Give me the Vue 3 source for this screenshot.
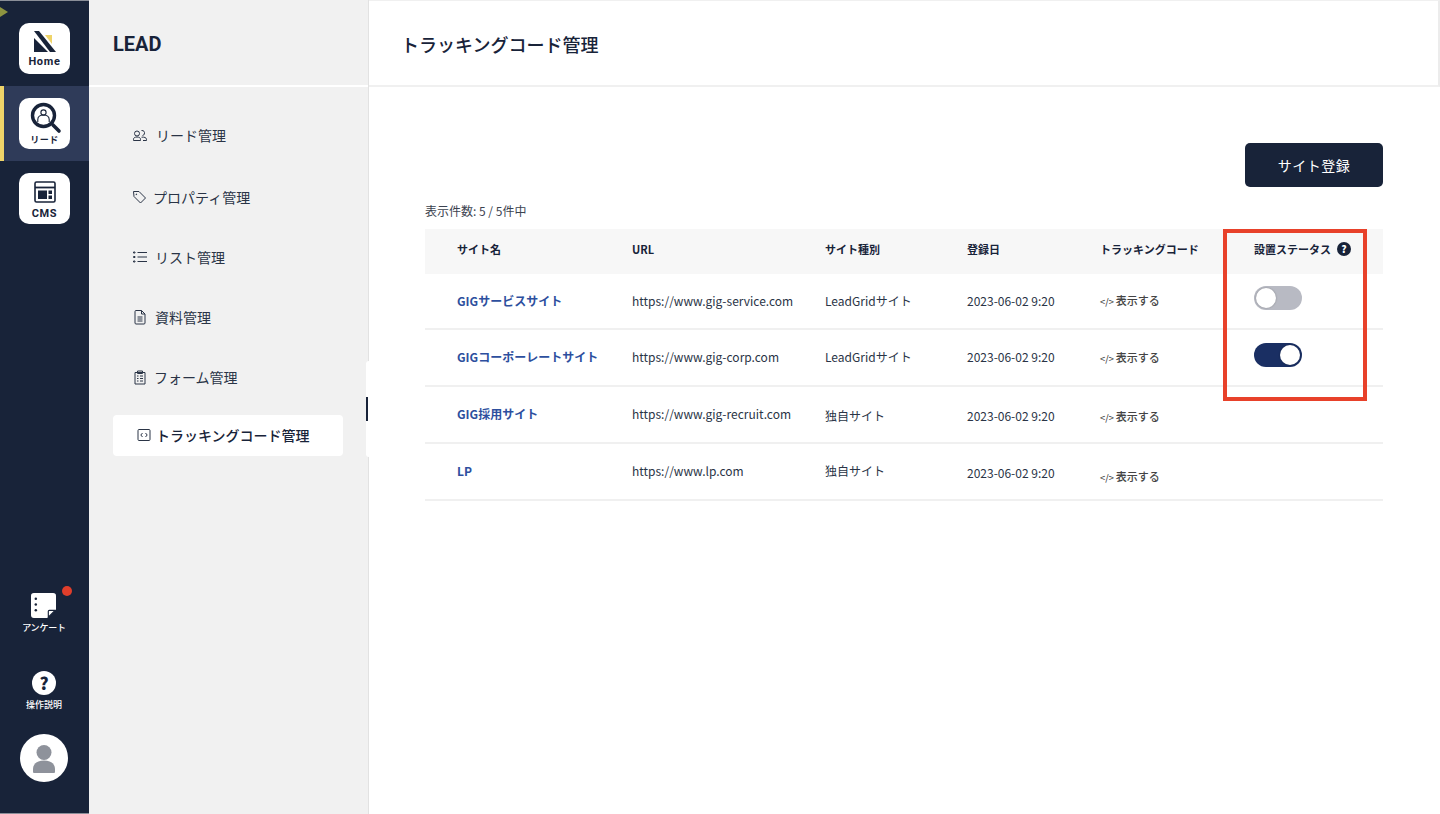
<template>
  <div class="app">
    <aside class="rail">
      <span class="corner"></span>
      <div class="rail-top">
        <div class="rail-slot">
          <a class="tile">
            <svg class="tile-icon" viewBox="0 0 22 22" width="22" height="22">
              <path d="M0 0h5l17 21h-6z" fill="#182339" />
              <path d="M0 7l14 14H0z" fill="#182339" />
              <path d="M11 4h7v9z" fill="#efd469" />
            </svg>
            <span class="tile-label en home">Home</span>
          </a>
        </div>
        <div class="rail-slot active">
          <a class="tile">
            <svg class="tile-icon search" viewBox="0 0 32 32" width="32" height="32">
              <circle cx="13.5" cy="13.5" r="11" fill="none" stroke="#182339" stroke-width="3.4" />
              <circle cx="13.5" cy="10.5" r="2.6" fill="none" stroke="#182339" stroke-width="1.1" />
              <path d="M7.8 20v-2.600c0-2.600 2.400-4.400 5.700-4.400s5.700 1.800 5.700 4.400V20" fill="none" stroke="#182339" stroke-width="1.1" />
              <path d="M23 23l6 6" stroke="#182339" stroke-width="3.6" stroke-linecap="round" />
            </svg>
            <span class="tile-label ja">リード</span>
          </a>
        </div>
        <div class="rail-slot">
          <a class="tile">
            <svg class="tile-icon" viewBox="0 0 22 22" width="22" height="22">
              <rect x="1" y="1" width="20" height="20" rx="1.500" fill="none" stroke="#182339" stroke-width="1.600" />
              <path d="M1 6.500h20" stroke="#182339" stroke-width="1.800" />
              <path d="M4 9.500h9v8.500H4zM14.500 9.500H18V13h-3.500zM14.500 14.500H18V18h-3.500z" fill="#182339" />
            </svg>
            <span class="tile-label en cms">CMS</span>
          </a>
        </div>
      </div>

      <div class="rail-bottom">
        <a class="rail-link survey">
          <i class="red-dot"></i>
          <svg viewBox="0 0 26 26" width="25" height="25">
            <path d="M3 0h20a3 3 0 0 1 3 3v14l-9 9H3a3 3 0 0 1-3-3V3a3 3 0 0 1 3-3z" fill="#fff" />
            <path d="M18 25v-6a1 1 0 0 1 1-1h6z" fill="#fff" stroke="#182339" stroke-width="1.200" />
            <circle cx="5" cy="6" r="1.300" fill="#182339" />
            <circle cx="5" cy="12" r="1.300" fill="#182339" />
            <circle cx="5" cy="18" r="1.300" fill="#182339" />
          </svg>
          <span>アンケート</span>
        </a>
        <a class="rail-link help">
          <span class="help-circle">?</span>
          <span>操作説明</span>
        </a>
        <div class="avatar">
          <svg viewBox="0 0 48 48" width="48" height="48">
            <circle cx="24" cy="18.500" r="7.500" fill="#8e929b" />
            <path d="M13 38v-3c0-5 4-8.500 11-8.500s11 3.500 11 8.500v3a1 1 0 0 1-1 1H14a1 1 0 0 1-1-1z" fill="#8e929b" />
          </svg>
        </div>
      </div>
    </aside>

    <nav class="side">
      <div class="side-head">LEAD</div>
      <ul class="side-list">
        <li v-for="item in menu" :key="item.label" :class="['side-item', item.cls, { current: item.current }]">
          <svg viewBox="0 0 16 16" width="16" height="16" fill="none" stroke="#2a3446" stroke-width="1">
            <path v-for="d in item.icon" :key="d" :d="d" />
          </svg>
          <span>{{ item.label }}</span>
        </li>
      </ul>
      <div class="notch"><i></i></div>
    </nav>

    <main class="main">
      <header class="main-head">
        <h1>トラッキングコード管理</h1>
      </header>
      <section class="content">
        <div class="actions">
          <button class="primary">サイト登録</button>
        </div>
        <p class="count">表示件数: 5 / 5件中</p>
        <div class="table-wrap">
          <table>
            <thead>
              <tr>
                <th class="c-name">サイト名</th>
                <th class="c-url">URL</th>
                <th class="c-type">サイト種別</th>
                <th class="c-date">登録日</th>
                <th class="c-code">トラッキングコード</th>
                <th>
                  <span class="status-head">設置ステータス<i class="q">?</i></span>
                </th>
              </tr>
            </thead>
            <tbody>
              <tr v-for="site in sites" :key="site.name" :style="{ height: site.h + 'px' }">
                <td class="name">{{ site.name }}</td>
                <td>{{ site.url }}</td>
                <td :style="{ paddingTop: site.typeDrop + 'px' }">{{ site.type }}</td>
                <td :style="{ paddingTop: site.dateDrop + 'px' }">{{ site.date }}</td>
                <td class="show" :style="{ paddingTop: site.showDrop + 'px' }">
                  <span class="code">&lt;/&gt;</span>表示する
                </td>
                <td>
                  <span v-if="site.on !== null" :class="['toggle', { on: site.on }]"><i></i></span>
                </td>
              </tr>
            </tbody>
          </table>
          <div class="highlight"></div>
        </div>
      </section>
    </main>
  </div>
</template>

<script setup>
const menu = [
  {
    label: 'リード管理',
    cls: 'leads',
    icon: [
      'M1.500 13.500v-1.200c0-1.500 1.300-2.300 3.500-2.300s3.500.8 3.500 2.300v1.200z',
      'M9.500 10.200c2.800-.4 5 .5 5 2.100v1.200h-3.500',
      'M5 4a2.500 2.500 0 1 0 0 5 2.500 2.500 0 0 0 0-5z',
      'M9.500 3.500a2.500 2.500 0 1 1 1 5',
    ],
  },
  {
    label: 'プロパティ管理',
    cls: 'props',
    icon: ['M1.500 2.500h5.500l6.500 6.500-5 5-6.500-6.500z', 'M4 5h.6v.6H4z'],
  },
  {
    label: 'リスト管理',
    cls: 'lists',
    icon: ['M5.500 3.500H15', 'M5.500 8H15', 'M5.500 12.500H15', 'M1.500 3h1.500v1H1.500z', 'M1.500 7.500h1.500v1H1.500z', 'M1.500 12h1.500v1H1.500z'],
  },
  {
    label: '資料管理',
    cls: 'docs',
    icon: ['M3 2.500a1 1 0 0 1 1-1h5.500L13 5v9a1 1 0 0 1-1 1H4a1 1 0 0 1-1-1z', 'M9.500 1.500V5H13', 'M5.500 8h5', 'M5.500 10h5', 'M5.500 12h5'],
  },
  {
    label: 'フォーム管理',
    cls: 'forms',
    icon: ['M3 3.500h10V15H3z', 'M5.500 2h5v2.500h-5z', 'M5 7h1.500', 'M8 7h3', 'M5 9.500h1.500', 'M8 9.500h3', 'M5 12h1.500', 'M8 12h3'],
  },
  {
    label: 'トラッキングコード管理',
    cls: 'codes',
    current: true,
    icon: ['M3 2.500h10a1 1 0 0 1 1 1v9a1 1 0 0 1-1 1H3a1 1 0 0 1-1-1v-9a1 1 0 0 1 1-1z', 'M6.500 6L4.800 8l1.700 2', 'M9.500 6l1.700 2-1.700 2'],
  },
]

const sites = [
  { name: 'GIGサービスサイト', url: 'https://www.gig-service.com', type: 'LeadGridサイト', date: '2023-06-02 9:20', on: false, h: 55, typeDrop: 0, dateDrop: 0, showDrop: 0 },
  { name: 'GIGコーポーレートサイト', url: 'https://www.gig-corp.com', type: 'LeadGridサイト', date: '2023-06-02 9:20', on: true, h: 57, typeDrop: 0, dateDrop: 0, showDrop: 0 },
  { name: 'GIG採用サイト', url: 'https://www.gig-recruit.com', type: '独自サイト', date: '2023-06-02 9:20', on: null, h: 57, typeDrop: 4, dateDrop: 4, showDrop: 4 },
  { name: 'LP', url: 'https://www.lp.com', type: '独自サイト', date: '2023-06-02 9:20', on: null, h: 57, typeDrop: 0, dateDrop: 4, showDrop: 10 },
]
</script>

<style>
html,
body {
  margin: 0;
  background: #fff;
}
</style>

<style scoped>
.app {
  display: flex;
  width: 1440px;
  height: 814px;
  overflow: hidden;
  font-family: "Noto Sans CJK JP", "Noto Sans", sans-serif;
  color: #182339;
}

.rail {
  position: relative;
  flex: 0 0 89px;
  box-sizing: border-box;
  display: flex;
  flex-direction: column;
  justify-content: space-between;
  background: #182339;
  border-top: 1px solid #8a8e98;
  border-bottom: 1px solid #8a8e98;
}

.corner {
  position: absolute;
  left: 0;
  top: 6px;
  border-left: 8px solid #8e9440;
  border-top: 5px solid transparent;
  border-bottom: 5px solid transparent;
}

.rail-top {
  padding-top: 10px;
  display: flex;
  flex-direction: column;
}

.rail-slot {
  height: 75px;
  display: flex;
  align-items: center;
  justify-content: center;
}

.rail-slot.active {
  background: #2f3b59;
  box-shadow: inset 4px 0 0 #efd469;
}

.tile {
  width: 51px;
  height: 51px;
  background: #fff;
  border-radius: 10px;
  display: flex;
  flex-direction: column;
  align-items: center;
}

.tile-icon {
  display: block;
  margin-top: 8px;
  flex: none;
}

.tile-icon.search {
  margin-top: 4px;
  margin-left: 2px;
}

.tile-label {
  font-weight: 700;
  line-height: 12px;
  color: #182339;
}

.tile-label.en {
  font-family: Roboto, "Noto Sans", sans-serif;
  font-size: 11px;
  letter-spacing: 0.7px;
}

.tile-label.home {
  margin-top: 3px;
}

.tile-label.cms {
  margin-top: 5px;
}

.tile-label.ja {
  font-size: 9px;
  letter-spacing: 0.5px;
}

.rail-bottom {
  display: flex;
  flex-direction: column;
  align-items: center;
  padding: 0 1px 31px 0;
}

.rail-link {
  position: relative;
  display: flex;
  flex-direction: column;
  align-items: center;
  color: #fff;
  font-size: 9px;
  font-weight: 500;
  line-height: 13px;
}

.survey {
  gap: 3px;
  letter-spacing: -0.2px;
}

.red-dot {
  position: absolute;
  left: 40px;
  top: -7px;
  width: 10px;
  height: 10px;
  border-radius: 50%;
  background: #e03e2b;
}

.help {
  margin-top: 37px;
  gap: 3px;
}

.help-circle {
  width: 24px;
  height: 24px;
  border-radius: 50%;
  background: #fff;
  color: #182339;
  font-size: 17px;
  font-weight: 900;
  line-height: 24px;
  text-align: center;
}

.avatar {
  margin-top: 23px;
  width: 48px;
  height: 48px;
  border-radius: 50%;
  background: #fff;
}

.avatar svg {
  display: block;
}

.side {
  position: relative;
  flex: 0 0 280px;
  background: #f1f1f1;
  border-right: 1px solid #e2e2e2;
  box-sizing: border-box;
}

.side-head {
  height: 87px;
  box-sizing: border-box;
  padding: 29px 0 0 24px;
  font-family: Roboto, "Noto Sans", sans-serif;
  font-size: 20px;
  line-height: 30px;
  font-weight: 700;
  border-bottom: 2px solid #fff;
}

.side-list {
  list-style: none;
  margin: 0;
  padding: 27px 25px 0 24px;
}

.side-item {
  display: flex;
  align-items: center;
  box-sizing: border-box;
  gap: 7px;
  height: 41px;
  padding-left: 19px;
  margin-bottom: 19px;
  border-radius: 4px;
  font-size: 14px;
  font-weight: 400;
  color: #2a3446;
}

.side-item.leads {
  gap: 8px;
  margin-bottom: 21px;
}

.side-item.props {
  gap: 5px;
}

.side-item.docs {
  gap: 7px;
}

.side-item.forms {
  gap: 6px;
  margin-bottom: 18px;
}

.side-item.codes {
  gap: 4px;
  padding: 0 0 1px 23px;
}

.side-item.current {
  background: #fff;
  font-weight: 500;
  color: #182339;
}

.side-item svg {
  flex: none;
}

.notch {
  position: absolute;
  right: -1px;
  top: 361px;
  width: 3px;
  height: 96px;
  background: #fff;
  border-radius: 3px 0 0 3px;
}

.notch i {
  position: absolute;
  left: 0;
  top: 36px;
  width: 2px;
  height: 24px;
  background: #182339;
}

.main {
  flex: 1;
  min-width: 0;
  background: #fff;
}

.main-head {
  height: 87px;
  box-sizing: border-box;
  border-bottom: 2px solid #f0f0f0;
  border-top: 1px solid #f0f0f0;
  border-right: 2px solid #ececec;
  padding: 30px 0 0 32px;
}

.main-head h1 {
  margin: 0;
  font-size: 18px;
  line-height: 27px;
  font-weight: 500;
}

.content {
  padding: 56px 57px 0 56px;
}

.actions {
  display: flex;
  justify-content: flex-end;
}

.primary {
  width: 138px;
  height: 44px;
  background: #182339;
  color: #fff;
  border: 0;
  border-radius: 5px;
  font-family: inherit;
  font-size: 14px;
  letter-spacing: 0.5px;
}

.count {
  margin: 15px 0 9px;
  font-size: 12px;
  line-height: 18px;
  color: #3c4350;
}

.table-wrap {
  position: relative;
}

table {
  width: 958px;
  border-collapse: collapse;
  table-layout: fixed;
}

th {
  height: 45px;
  box-sizing: border-box;
  padding: 0 0 6px;
  background: #f7f7f7;
  font-size: 11px;
  font-weight: 700;
  text-align: left;
  color: #182339;
}

th.c-name {
  box-sizing: border-box;
  width: 207px;
  padding-left: 32px;
}

.c-url {
  width: 193px;
}

.c-type {
  width: 142px;
}

.c-date {
  width: 133px;
}

.c-code {
  width: 154px;
}

td {
  padding: 0 0 2px;
  font-size: 12px;
  color: #2a3446;
  border-bottom: 2px solid #f0f0f0;
}

td.name {
  padding-left: 32px;
  font-weight: 700;
  color: #2d4f9e;
}

td.show {
  font-size: 11px;
  font-weight: 500;
  color: #444;
}

.code {
  font-size: 9px;
  margin-right: 2px;
}

.status-head {
  display: inline-flex;
  align-items: center;
  gap: 6px;
}

.q {
  width: 14px;
  height: 14px;
  border-radius: 50%;
  background: #182339;
  color: #fff;
  font-size: 10px;
  font-style: normal;
  font-weight: 900;
  line-height: 14px;
  text-align: center;
}

.toggle {
  display: block;
  box-sizing: border-box;
  width: 48px;
  height: 24px;
  margin-top: -4px;
  padding: 2px;
  border-radius: 12px;
  background: #b8bac3;
}

.toggle i {
  display: block;
  width: 20px;
  height: 20px;
  border-radius: 50%;
  background: #fff;
  box-shadow: 0 0 2px rgba(0, 0, 0, 0.3);
}

.toggle.on {
  background: #1a2f63;
  display: flex;
  justify-content: flex-end;
}

.highlight {
  position: absolute;
  left: 798px;
  top: 0;
  width: 144px;
  height: 172px;
  border: 4px solid #e8412a;
  pointer-events: none;
  box-sizing: border-box;
}
</style>
